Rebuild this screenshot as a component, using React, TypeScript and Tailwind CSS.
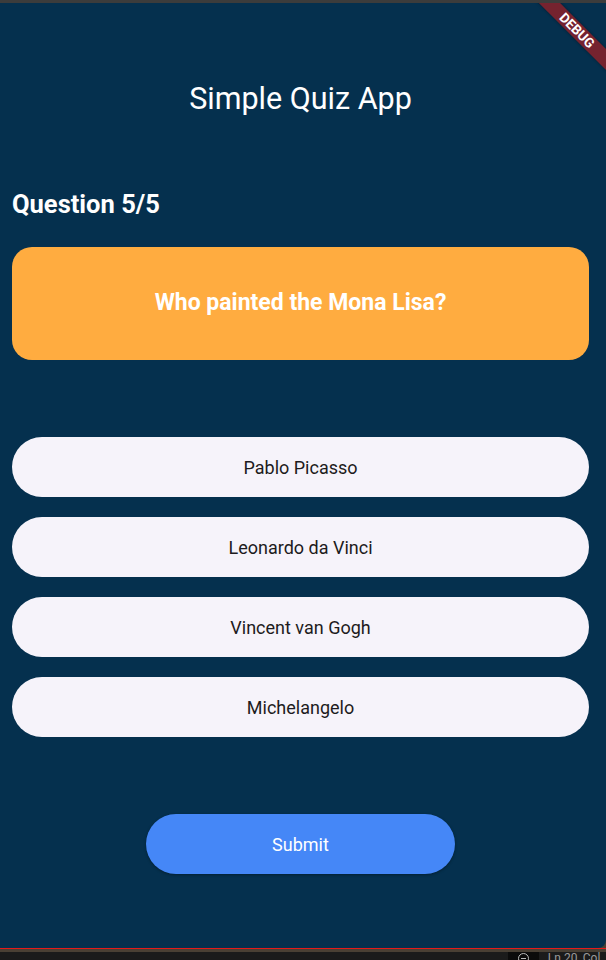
import React from 'react';

const answers = ['Pablo Picasso', 'Leonardo da Vinci', 'Vincent van Gogh', 'Michelangelo'];

const App: React.FC = () => {
  return (
    <div className="w-[606px] h-[960px] overflow-hidden bg-[#1b1b1b] flex flex-col" style={{ fontFamily: 'Roboto, "Noto Sans", sans-serif' }}>
      {/* window title edge */}
      <div className="h-[3px] bg-[#3c3c3c] shrink-0" />

      {/* app area */}
      <div className="bg-[#4a4034] shrink-0">
        <div className="relative h-[945px] bg-[#05304e] rounded-br-[8px] flex flex-col items-center pt-[78px] pl-3 pr-[17px]">
          <h1 className="text-[30.5px] leading-[36px] text-white font-normal">Simple Quiz App</h1>

          <div className="w-full mt-[71px] text-[25.5px] leading-[32px] font-bold text-white">Question 5/5</div>

          <div className="w-full mt-[27px] h-[113px] rounded-[20px] bg-[#ffac40] flex items-center justify-center">
            <span className="text-[23px] font-bold text-white">Who painted the Mona Lisa?</span>
          </div>

          <div className="w-full mt-[77px] flex flex-col gap-5">
            {answers.map((a) => (
              <button
                key={a}
                className="w-full h-[60px] rounded-full bg-[#f6f3fa] text-[18px] text-[#1d1b20] flex items-center justify-center"
              >
                {a}
              </button>
            ))}
          </div>

          <button className="mt-[77px] w-[309px] h-[60px] rounded-full bg-[#4587f7] text-white text-[18px] shadow-[0_1px_3px_rgba(0,0,0,0.35)]">
            Submit
          </button>

          {/* debug banner */}
          <div className="absolute top-0 right-0 w-[80px] h-[80px] overflow-hidden pointer-events-none">
            <div className="absolute left-[-9px] top-[20px] w-[120px] h-[15px] rotate-45 bg-[#75232f] flex items-center justify-center shadow-[0_0_3px_rgba(0,0,0,0.4)]">
              <span className="text-[13.5px] leading-[15px] font-bold text-white">DEBUG</span>
            </div>
          </div>
        </div>
      </div>

      {/* editor status strip */}
      <div className="h-[1px] bg-[#e51a1a] shrink-0" />
      <div className="h-[3px] bg-[#4a4034] shrink-0" />
      <div className="flex-1 flex items-start">
        <div className="ml-[508px] w-[33px] h-full bg-[#0b0b0b] flex justify-center">
          <div className="mt-[1px] w-[11px] h-[11px] rounded-full border border-[#bbbbbb] flex items-center justify-center">
            <div className="w-[5px] h-[1px] bg-[#bbbbbb]" />
          </div>
        </div>
        <span className="ml-[9px] mt-[-1px] text-[12px] leading-[14px] text-[#9a9a9a]">Ln 20, Col 1</span>
      </div>
    </div>
  );
};

export default App;
